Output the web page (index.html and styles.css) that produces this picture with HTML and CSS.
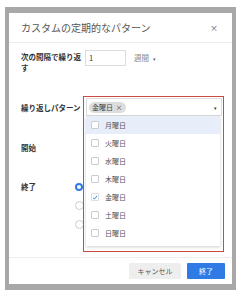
FILE: index.html
```html
<!DOCTYPE html>
<html lang="ja">
<head>
    <meta charset="UTF-8">
    <title>カスタムの定期的なパターン</title>
    <link rel="stylesheet" href="styles.css">
</head>
<body>
    <div class="backdrop">
        <div class="dialog">
            <div class="dialog-header">
                <span class="title">カスタムの定期的なパターン</span>
                <span class="close">×</span>
            </div>

            <div class="dialog-body">
                <div class="row row-interval">
                    <div class="label">次の間隔で繰り返す</div>
                    <div class="control">
                        <div class="num-input">1</div>
                        <span class="unit">週間 <span class="caret">▾</span></span>
                    </div>
                </div>

                <div class="row row-pattern">
                    <div class="label">繰り返しパターン</div>
                    <div class="control pattern-wrap">
                        <div class="select">
                            <span class="chip">金曜日 <span class="chip-x">×</span></span>
                            <span class="arrow">▾</span>
                        </div>
                        <ul class="day-list">
                            <li class="active"><span class="check"></span>月曜日</li>
                            <li><span class="check"></span>火曜日</li>
                            <li><span class="check"></span>水曜日</li>
                            <li><span class="check"></span>木曜日</li>
                            <li><span class="check checked">
                                <svg width="7" height="7" viewBox="0 0 7 7"><path d="M1.2 3.8 L2.8 5.3 L5.9 1.6" fill="none" stroke="#2f7ae5" stroke-width="1.1"/></svg>
                            </span>金曜日</li>
                            <li><span class="check"></span>土曜日</li>
                            <li><span class="check"></span>日曜日</li>
                        </ul>
                        <div class="annotation"></div>
                    </div>
                </div>

                <div class="row row-start">
                    <div class="label">開始</div>
                </div>

                <div class="row row-end">
                    <div class="label">終了</div>
                    <div class="options">
                        <div class="option"><span class="radio on"></span></div>
                        <div class="option"><span class="radio"></span></div>
                        <div class="option"><span class="radio"></span></div>
                    </div>
                </div>
            </div>

            <div class="dialog-footer">
                <button class="btn btn-cancel">キャンセル</button>
                <button class="btn btn-ok">終了</button>
            </div>
        </div>
    </div>
</body>
</html>
```

FILE: styles.css
```css
body {
    margin: 0;
    background: #fff;
    font-family: 'Noto Sans CJK JP', 'Noto Sans', sans-serif;
    color: #333;
}
.backdrop {
    margin: 7px 5px 0;
    padding: 6px 4px;
    background: #a8a8a8;
}
.dialog {
    background: #fff;
    height: 271px;
    display: flex;
    flex-direction: column;
}
.dialog-header {
    height: 29px;
    border-bottom: 1px solid #ececec;
    display: flex;
    align-items: center;
    justify-content: space-between;
    padding: 0 14px 0 12px;
}
.title {
    font-size: 10px;
    color: #555;
    margin-top: -1px;
}
.close {
    font-size: 8px;
    color: #555;
    margin-top: -1px;
}
.dialog-body {
    flex: 1;
    padding: 7px 0 0 12px;
}
.row {
    display: flex;
}
.label {
    width: 64px;
    font-size: 7.5px;
    font-weight: bold;
    line-height: 11px;
    color: #333;
}
.control {
    display: flex;
    align-items: center;
}
.row-interval .label {
    padding-top: 1px;
}
.row-interval .control {
    align-items: flex-start;
}
.num-input {
    width: 36px;
    height: 14px;
    border: 1px solid #ddd;
    padding-left: 3px;
    font-size: 7.5px;
    line-height: 14px;
    color: #333;
}
.unit {
    margin-left: 8px;
    font-size: 7.5px;
    line-height: 16px;
    color: #888;
}
.caret {
    font-size: 5px;
    color: #666;
    margin-left: 2px;
}
.row-pattern {
    margin-top: 25px;
    align-items: center;
}
.row-pattern .label {
    width: 65px;
}
.pattern-wrap {
    position: relative;
}
.select {
    height: 16px;
    border: 1px solid #ddd;
    display: flex;
    align-items: center;
    justify-content: space-between;
    padding: 0 4px 0 2px;
    width: 128px;
}
.chip {
    background: #ddd;
    border-radius: 6px;
    font-size: 7px;
    line-height: 11px;
    padding: 0 3px;
    color: #444;
}
.chip-x {
    font-size: 7px;
    margin-left: 1px;
}
.arrow {
    font-size: 5px;
    color: #333;
}
.day-list {
    position: absolute;
    top: 18px;
    left: 0;
    width: 134px;
    margin: 0;
    padding: 0 0 4px;
    list-style: none;
    background: #fff;
    box-shadow: 0 1px 3px rgba(0, 0, 0, 0.2);
    z-index: 2;
}
.day-list li {
    height: 18px;
    display: flex;
    align-items: center;
    font-size: 7px;
    color: #555;
}
.day-list li.active {
    background: #e7eefa;
}
.check {
    width: 6px;
    height: 6px;
    border: 1px solid #ccc;
    border-radius: 1px;
    margin: 0 6px 0 5px;
    display: flex;
    align-items: center;
    justify-content: center;
    background: #fff;
}
.check.checked {
    border-color: #ddd;
}
.annotation {
    position: absolute;
    top: -2px;
    left: -3px;
    width: 139px;
    height: 154px;
    border: 1px solid #cc4a43;
    z-index: 3;
}
.row-start {
    margin-top: 22px;
    height: 18px;
    align-items: center;
}
.row-end {
    margin-top: 21px;
}
.row-end .label {
    width: 54px;
    line-height: 19px;
}
.option {
    height: 19px;
    display: flex;
    align-items: center;
}
.radio {
    width: 7px;
    height: 7px;
    border: 1px solid #ccc;
    border-radius: 50%;
    background: #fff;
}
.radio.on {
    border: 2.5px solid #2f7ae5;
    width: 4px;
    height: 4px;
}
.dialog-footer {
    border-top: 1px solid #eee;
    height: 27px;
    display: flex;
    align-items: flex-start;
    justify-content: flex-end;
    padding: 5px 7px 0 0;
    box-sizing: border-box;
    gap: 6px;
}
.btn {
    height: 16px;
    border: none;
    border-radius: 1px;
    font-family: inherit;
    font-size: 7px;
    padding: 0;
}
.btn-cancel {
    width: 52px;
    background: #eee;
    color: #555;
}
.btn-ok {
    width: 38px;
    background: #2f7ae5;
    color: #fff;
}
```
